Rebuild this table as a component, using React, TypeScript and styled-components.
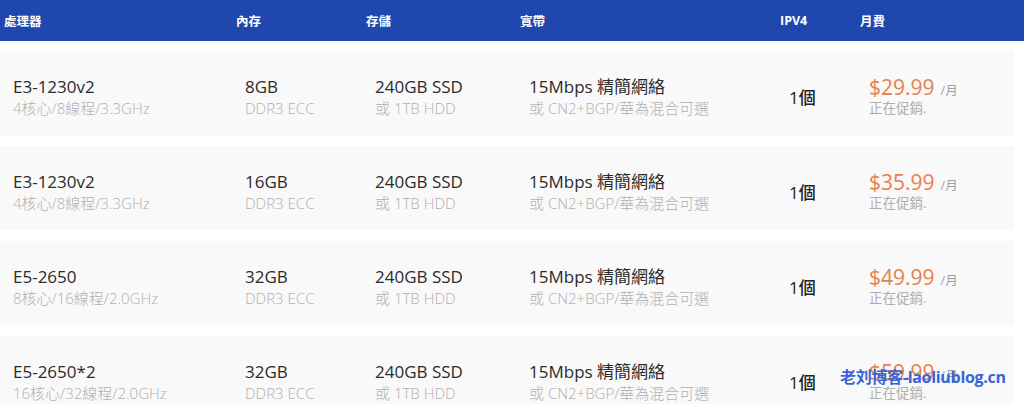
import React from "react";
import styled, { createGlobalStyle } from "styled-components";

const Global = createGlobalStyle`
  html, body { margin: 0; padding: 0; background: #fff; }
  body { font-family: "Open Sans", "Noto Sans CJK TC", sans-serif; }
`;

const Page = styled.div`
  position: relative;
  width: 1024px;
  height: 404px;
  overflow: hidden;
  background: #fff;
`;

const cols = "232px 130px 154px 260px 80px 1fr";

const Header = styled.div`
  display: grid;
  grid-template-columns: ${cols};
  align-items: center;
  height: 41px;
  padding-left: 4px;
  background: #1f47ad;
  color: #fff;
  font-size: 12.5px;
  font-weight: 700;
`;

const List = styled.div`
  display: flex;
  flex-direction: column;
  gap: 12px;
  padding: 10px 10px 0 0;
`;

const Row = styled.div`
  display: grid;
  grid-template-columns: ${cols};
  align-items: center;
  height: 83px;
  box-sizing: border-box;
  padding: 8px 0 0 13px;
  background: #f9f9f9;
  box-shadow: 0 1px 2px rgba(0, 0, 0, 0.03);
`;

const Cell = styled.div`
  display: flex;
  flex-direction: column;
`;

const Main = styled.div`
  font-size: 17px;
  line-height: 22px;
  color: #2b2b2b;
`;

const Sub = styled.div`
  font-size: 15px;
  line-height: 20px;
  color: #b0b0b0;
  font-weight: 300;
`;

const Ip = styled.div`
  font-size: 17px;
  color: #222;
  font-weight: 500;
`;

const PriceLine = styled.div`
  display: flex;
  align-items: baseline;
  gap: 6px;
`;

const Price = styled.span`
  font-size: 21px;
  line-height: 24px;
  color: #e8804c;
`;

const Per = styled.span`
  font-size: 12.5px;
  color: #9aa0a6;
`;

const Promo = styled.div`
  font-size: 13.5px;
  line-height: 19px;
  color: #adadad;
`;

const Watermark = styled.div`
  position: absolute;
  left: 840px;
  top: 364px;
  font-size: 16px;
  font-weight: 700;
  color: #3b63d6;
  letter-spacing: -0.3px;
  font-family: "Open Sans", "Noto Sans CJK SC", sans-serif;
`;

const rows = [
  { cpu: "E3-1230v2", spec: "4核心/8線程/3.3GHz", ram: "8GB", price: "$29.99" },
  { cpu: "E3-1230v2", spec: "4核心/8線程/3.3GHz", ram: "16GB", price: "$35.99" },
  { cpu: "E5-2650", spec: "8核心/16線程/2.0GHz", ram: "32GB", price: "$49.99" },
  { cpu: "E5-2650*2", spec: "16核心/32線程/2.0GHz", ram: "32GB", price: "$59.99" },
];

export default function App() {
  return (
    <Page>
      <Global />
      <Header>
        <div>處理器</div>
        <div>內存</div>
        <div>存儲</div>
        <div>寬帶</div>
        <div>IPV4</div>
        <div>月費</div>
      </Header>
      <List>
        {rows.map((r, i) => (
          <Row key={i}>
            <Cell>
              <Main>{r.cpu}</Main>
              <Sub>{r.spec}</Sub>
            </Cell>
            <Cell>
              <Main>{r.ram}</Main>
              <Sub>DDR3 ECC</Sub>
            </Cell>
            <Cell>
              <Main>240GB SSD</Main>
              <Sub>或 1TB HDD</Sub>
            </Cell>
            <Cell>
              <Main>15Mbps 精簡網絡</Main>
              <Sub>或 CN2+BGP/華為混合可選</Sub>
            </Cell>
            <Ip>1個</Ip>
            <Cell>
              <PriceLine>
                <Price>{r.price}</Price>
                <Per>/月</Per>
              </PriceLine>
              <Promo>正在促銷.</Promo>
            </Cell>
          </Row>
        ))}
      </List>
      <Watermark>老刘博客-laoliublog.cn</Watermark>
    </Page>
  );
}
